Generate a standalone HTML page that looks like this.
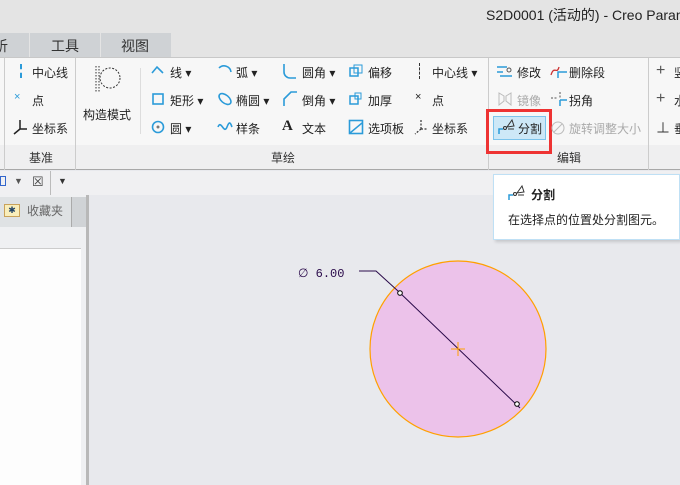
<!DOCTYPE html>
<html><head><meta charset="utf-8"><style>
*{margin:0;padding:0;box-sizing:border-box}
body{width:680px;height:485px;overflow:hidden;background:#e8e9ed;font-family:"Liberation Sans","Noto Sans CJK SC",sans-serif;font-size:12px;color:#222;position:relative}
.a{position:absolute;white-space:nowrap}
.t{font-size:12px;line-height:14px}
.g{color:#aaa}
.ic{position:absolute}
</style></head><body>
<!-- title bar -->
<div class="a" style="left:0;top:0;width:680px;height:33px;background:#e4e4e4"></div>
<div class="a" style="left:486px;top:5px;font-size:14px;color:#222">S2D0001 (活动的) - Creo Param</div>
<!-- tabs -->
<div class="a" style="left:0;top:33px;width:680px;height:24px;background:#e4e4e4"></div>
<div class="a" style="left:0;top:33px;width:29px;height:24px;background:#cfd2d5"></div>
<div class="a" style="left:30px;top:33px;width:70px;height:24px;background:#cfd2d5"></div>
<div class="a" style="left:101px;top:33px;width:70px;height:24px;background:#cfd2d5"></div>
<div class="a" style="left:-6px;top:36px;font-size:14px;color:#333">析</div>
<div class="a" style="left:51px;top:36px;font-size:14px;color:#333">工具</div>
<div class="a" style="left:121px;top:36px;font-size:14px;color:#333">视图</div>
<!-- ribbon -->
<div class="a" style="left:0;top:57px;width:680px;height:88px;background:#f7f7f7;border-top:1px solid #c8c8c8"></div>
<div class="a" style="left:0;top:145px;width:680px;height:25px;background:#efeff0;border-bottom:1px solid #a8a8a8"></div>
<div class="a" style="left:4px;top:58px;width:1px;height:112px;background:#ccc"></div>
<div class="a" style="left:75px;top:58px;width:1px;height:112px;background:#ccc"></div>
<div class="a" style="left:488px;top:58px;width:1px;height:112px;background:#ccc"></div>
<div class="a" style="left:648px;top:58px;width:1px;height:112px;background:#ccc"></div>
<div class="a" style="left:140px;top:68px;width:1px;height:66px;background:#ddd"></div>
<div class="a t" style="left:29px;top:151px;color:#333">基准</div>
<div class="a t" style="left:271px;top:151px;color:#333">草绘</div>
<div class="a t" style="left:557px;top:151px;color:#333">编辑</div>
<!-- datum group -->
<div class="a" style="left:20px;top:64px;width:0;height:14px;border-left:2px dashed #2b9bd9"></div>
<div class="a t" style="left:32px;top:66px">中心线</div>
<div class="a" style="left:14px;top:91px;color:#2b9bd9;font-size:11px">×</div>
<div class="a t" style="left:32px;top:94px">点</div>
<svg class="ic" style="left:11px;top:118px" width="18" height="18"><path d="M9 2v9M9 11h7M9 11l-6 5" stroke="#222" stroke-width="1.5" fill="none"/></svg>
<div class="a t" style="left:32px;top:122px">坐标系</div>
<!-- construction -->
<svg class="ic" style="left:93px;top:64px" width="30" height="30"><path d="M3 2v26M6 2v26" stroke="#333" stroke-dasharray="1.5 1.5"/><circle cx="17" cy="14" r="10" stroke="#333" fill="none" stroke-dasharray="2 1.5"/></svg>
<div class="a t" style="left:83px;top:108px">构造模式</div>
<!-- sketch col 1 -->
<svg class="ic" style="left:151px;top:65px" width="14" height="10"><path d="M1 8l5-6 6 6" stroke="#2b9bd9" stroke-width="1.6" fill="none"/></svg>
<div class="a t" style="left:170px;top:66px">线 ▾</div>
<svg class="ic" style="left:151px;top:92px" width="14" height="14"><rect x="2" y="2" width="10" height="10" stroke="#2b9bd9" stroke-width="1.6" fill="none"/></svg>
<div class="a t" style="left:170px;top:94px">矩形 ▾</div>
<svg class="ic" style="left:151px;top:120px" width="14" height="14"><circle cx="7" cy="7" r="5.5" stroke="#2b9bd9" stroke-width="1.6" fill="none"/><circle cx="7" cy="7" r="1.5" fill="#777"/></svg>
<div class="a t" style="left:170px;top:122px">圆 ▾</div>
<!-- col 2 -->
<svg class="ic" style="left:217px;top:64px" width="16" height="14"><path d="M2 4a7 7 0 0 1 12 4" stroke="#2b9bd9" stroke-width="1.6" fill="none"/></svg>
<div class="a t" style="left:236px;top:66px">弧 ▾</div>
<svg class="ic" style="left:217px;top:92px" width="16" height="14"><ellipse cx="8" cy="7" rx="7" ry="4" transform="rotate(40 8 7)" stroke="#2b9bd9" stroke-width="1.6" fill="none"/></svg>
<div class="a t" style="left:236px;top:94px">椭圆 ▾</div>
<svg class="ic" style="left:217px;top:121px" width="16" height="12"><path d="M1 6c3-8 6 8 9 0s4-2 5 0" stroke="#2b9bd9" stroke-width="1.6" fill="none"/></svg>
<div class="a t" style="left:236px;top:122px">样条</div>
<!-- col 3 -->
<svg class="ic" style="left:282px;top:63px" width="16" height="16"><path d="M2 1v8a6 6 0 0 0 6 6h6" stroke="#2b9bd9" stroke-width="1.6" fill="none"/></svg>
<div class="a t" style="left:302px;top:66px">圆角 ▾</div>
<svg class="ic" style="left:282px;top:91px" width="16" height="16"><path d="M2 15V8l7-7h6" stroke="#2b9bd9" stroke-width="1.6" fill="none"/></svg>
<div class="a t" style="left:302px;top:94px">倒角 ▾</div>
<div class="a" style="left:282px;top:118px;font-size:15px;font-weight:bold;font-family:'Liberation Serif',serif">A</div>
<div class="a t" style="left:302px;top:122px">文本</div>
<!-- col 4 -->
<svg class="ic" style="left:348px;top:64px" width="16" height="14"><rect x="2" y="4" width="8" height="8" stroke="#2b9bd9" stroke-width="1.5" fill="none"/><rect x="6" y="1" width="8" height="8" stroke="#2b9bd9" fill="none"/></svg>
<div class="a t" style="left:368px;top:66px">偏移</div>
<svg class="ic" style="left:348px;top:92px" width="16" height="14"><rect x="2" y="4" width="8" height="8" stroke="#2b9bd9" stroke-width="1.5" fill="none"/><rect x="7" y="1" width="6" height="6" stroke="#2b9bd9" fill="none"/></svg>
<div class="a t" style="left:368px;top:94px">加厚</div>
<svg class="ic" style="left:348px;top:119px" width="16" height="16"><rect x="1.5" y="1.5" width="13" height="13" stroke="#2b9bd9" stroke-width="1.6" fill="none"/><path d="M2 14L14 4" stroke="#2b9bd9" stroke-width="1.5"/></svg>
<div class="a t" style="left:368px;top:122px">选项板</div>
<!-- col 5 -->
<div class="a" style="left:419px;top:63px;width:0;height:16px;border-left:1px dashed #333"></div>
<div class="a t" style="left:432px;top:66px">中心线 ▾</div>
<div class="a" style="left:415px;top:91px;font-size:11px">×</div>
<div class="a t" style="left:432px;top:94px">点</div>
<svg class="ic" style="left:412px;top:118px" width="18" height="18"><path d="M9 2v9M9 11h7M9 11l-6 5" stroke="#333" stroke-width="1.2" fill="none" stroke-dasharray="2 1.5"/></svg>
<div class="a t" style="left:432px;top:122px">坐标系</div>
<!-- edit group -->
<svg class="ic" style="left:496px;top:64px" width="18" height="14"><path d="M1 3h10M1 8h6M4 12h12" stroke="#2b9bd9" stroke-width="1.5"/><circle cx="13" cy="6" r="2" stroke="#555" fill="none"/></svg>
<div class="a t" style="left:517px;top:66px">修改</div>
<svg class="ic" style="left:550px;top:63px" width="18" height="16"><path d="M1 12c3-10 6 0 8-8" stroke="#c33" stroke-width="1.3" fill="none"/><path d="M8 15V9h9" stroke="#2b9bd9" stroke-width="1.5" fill="none"/></svg>
<div class="a t" style="left:569px;top:66px">删除段</div>
<svg class="ic" style="left:496px;top:91px" width="18" height="16"><path d="M3 2v12l5-4V5zM15 2v12l-5-4V5z" stroke="#bbb" fill="none"/></svg>
<div class="a t g" style="left:517px;top:94px">镜像</div>
<svg class="ic" style="left:550px;top:91px" width="18" height="16"><path d="M1 7h6M10 1v6" stroke="#555" stroke-dasharray="2 1.5"/><path d="M10 9v6M10 9h7" stroke="#2b9bd9" stroke-width="1.5"/></svg>
<div class="a t" style="left:569px;top:94px">拐角</div>
<div class="a" style="left:493px;top:116px;width:53px;height:24px;background:#cde8f7;border:1px solid #7cc4ec"></div>
<svg class="ic" style="left:497px;top:118px" width="20" height="18"><path d="M2 16v-5h4" stroke="#2b9bd9" stroke-width="1.5" fill="none"/><circle cx="8" cy="10" r="1.5" stroke="#333" fill="none"/><path d="M10 9l5-7 2 6zM11 11h6" stroke="#333" fill="none"/></svg>
<div class="a t" style="left:518px;top:122px">分割</div>
<div class="a" style="left:486px;top:109px;width:66px;height:45px;border:3px solid #ee3333"></div>
<svg class="ic" style="left:550px;top:120px" width="16" height="16"><circle cx="8" cy="8" r="6" stroke="#bbb" fill="none"/><path d="M4 12l8-8" stroke="#bbb"/></svg>
<div class="a t g" style="left:569px;top:122px">旋转调整大小</div>
<!-- right cut -->
<div class="a" style="left:656px;top:62px;font-size:16px;color:#555">+</div>
<div class="a" style="left:656px;top:90px;font-size:16px;color:#555">+</div>
<div class="a" style="left:656px;top:118px;font-size:14px;color:#333">⊥</div>
<div class="a t" style="left:674px;top:66px">竖</div>
<div class="a t" style="left:674px;top:94px">水</div>
<div class="a t" style="left:674px;top:122px">垂</div>
<!-- toolbar row -->
<div class="a" style="left:0;top:171px;width:680px;height:24px;background:#f0f0f2"></div>
<div class="a" style="left:50px;top:171px;width:1px;height:24px;background:#bbb"></div>
<div class="a" style="left:0;top:176px;width:6px;height:10px;border:1px solid #36c"></div>
<div class="a" style="left:14px;top:176px;font-size:9px;color:#555">▼</div>
<div class="a" style="left:32px;top:174px;font-size:13px;color:#444">☒</div>
<div class="a" style="left:58px;top:176px;font-size:9px;color:#333">▼</div>
<!-- left panel -->
<div class="a" style="left:0;top:195px;width:89px;height:290px;background:#eff0f2;border-right:3px solid #b8b8b8"></div>
<div class="a" style="left:72px;top:197px;width:14px;height:30px;background:#d0d3d6"></div>
<div class="a" style="left:0;top:197px;width:72px;height:30px;background:#dfe2e4;border-right:1px solid #aaa"></div>
<div class="a" style="left:4px;top:204px;width:16px;height:13px;background:#f9eebb;border:1px solid #c9a25a;font-size:9px;color:#246;text-align:center;line-height:11px">✱</div>
<div class="a t" style="left:27px;top:204px;color:#666">收藏夹</div>
<div class="a" style="left:0;top:248px;width:81px;height:237px;background:#fdfdfd;border-top:1px solid #ccc"></div>
<!-- tooltip -->
<div class="a" style="left:493px;top:174px;width:187px;height:66px;background:#fff;border:1px solid #bfe0f5;box-shadow:2px 2px 3px rgba(0,0,0,0.15)"></div>
<svg class="ic" style="left:507px;top:184px" width="20" height="18"><path d="M2 16v-5h4" stroke="#2b9bd9" stroke-width="1.5" fill="none"/><circle cx="8" cy="10" r="1.5" stroke="#333" fill="none"/><path d="M10 9l5-7 2 6zM11 11h6" stroke="#333" fill="none"/></svg>
<div class="a t" style="left:531px;top:188px;font-weight:bold">分割</div>
<div class="a t" style="left:508px;top:213px">在选择点的位置处分割图元。</div>
<!-- drawing -->
<svg class="ic" style="left:0;top:0" width="680" height="485">
<circle cx="458" cy="349" r="88" fill="#ecc2ea" stroke="#ffa000" stroke-width="1.2"/>
<path d="M359 271h17l22 20 122 117" stroke="#2a0a4a" stroke-width="1" fill="none"/>
<circle cx="400" cy="293" r="2.3" fill="#fff" stroke="#000"/>
<circle cx="517" cy="404" r="2.3" fill="#fff" stroke="#000"/>
<path d="M451 349h14M458 342v14" stroke="#ffa000" stroke-width="1"/>
<text x="298" y="277" font-family="Liberation Mono,monospace" font-size="12" fill="#2a0a4a">∅ 6.00</text>
</svg>
</body></html>
